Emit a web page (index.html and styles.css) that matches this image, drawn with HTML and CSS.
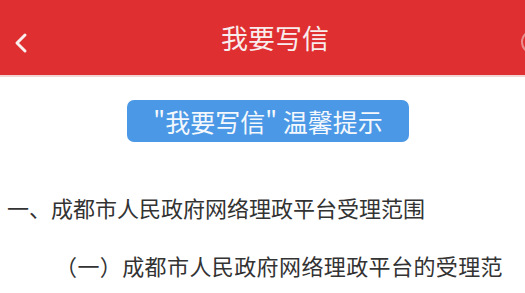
FILE: index.html
```html
<!DOCTYPE html>
<html lang="zh-CN">
<head>
  <meta charset="UTF-8" />
  <meta name="viewport" content="width=device-width, initial-scale=1.0">
  <title>我要写信</title>
  <link rel="stylesheet" href="styles.css">
</head>
<body>
  <div class="topbar">
    <a class="back" href="#">
      <svg width="18" height="22" viewBox="0 0 18 22">
        <path d="M13 3 L5 11 L13 19" fill="none" stroke="#fbeeee" stroke-width="3" stroke-linecap="round" stroke-linejoin="round"/>
      </svg>
    </a>
    <div class="title">我要写信</div>
    <div class="more"></div>
  </div>

  <div class="content">
    <div class="tip-btn">"我要写信" 温馨提示</div>
    <p class="sec">一、成都市人民政府网络理政平台受理范围</p>
    <p class="sub">（一）成都市人民政府网络理政平台的受理范</p>
  </div>
</body>
</html>
```

FILE: styles.css
```css
body {
  margin: 0;
  background: #fff;
  font-family: "Noto Sans CJK SC", "Noto Sans", sans-serif;
  overflow: hidden;
}

.topbar {
  position: relative;
  display: flex;
  align-items: center;
  justify-content: center;
  height: 75px;
  background-color: #e02f31;
  border-bottom: 2px solid #f1d4d4;
}

.back {
  position: absolute;
  left: 12px;
  top: 32px;
}

.title {
  margin-left: 25px;
  font-size: 27px;
  color: #f8ecec;
}

.more {
  position: absolute;
  right: -20px;
  top: 30px;
  width: 20px;
  height: 20px;
  border: 2px solid #ea8d8d;
  border-radius: 50%;
}

.content {
  padding-top: 23px;
}

.tip-btn {
  width: 282px;
  height: 42px;
  margin-left: 127px;
  background-color: #4b98e6;
  border-radius: 7px;
  color: #f4f8fd;
  font-size: 25px;
  line-height: 42px;
  text-align: center;
}

.sec, .sub {
  margin: 0;
  font-size: 22px;
  color: #333;
  line-height: 30px;
}

.sec {
  margin-top: 50px;
  padding-left: 7px;
}

.sub {
  margin-top: 28px;
  padding-left: 55px;
  letter-spacing: 0.4px;
  white-space: nowrap;
}
```
